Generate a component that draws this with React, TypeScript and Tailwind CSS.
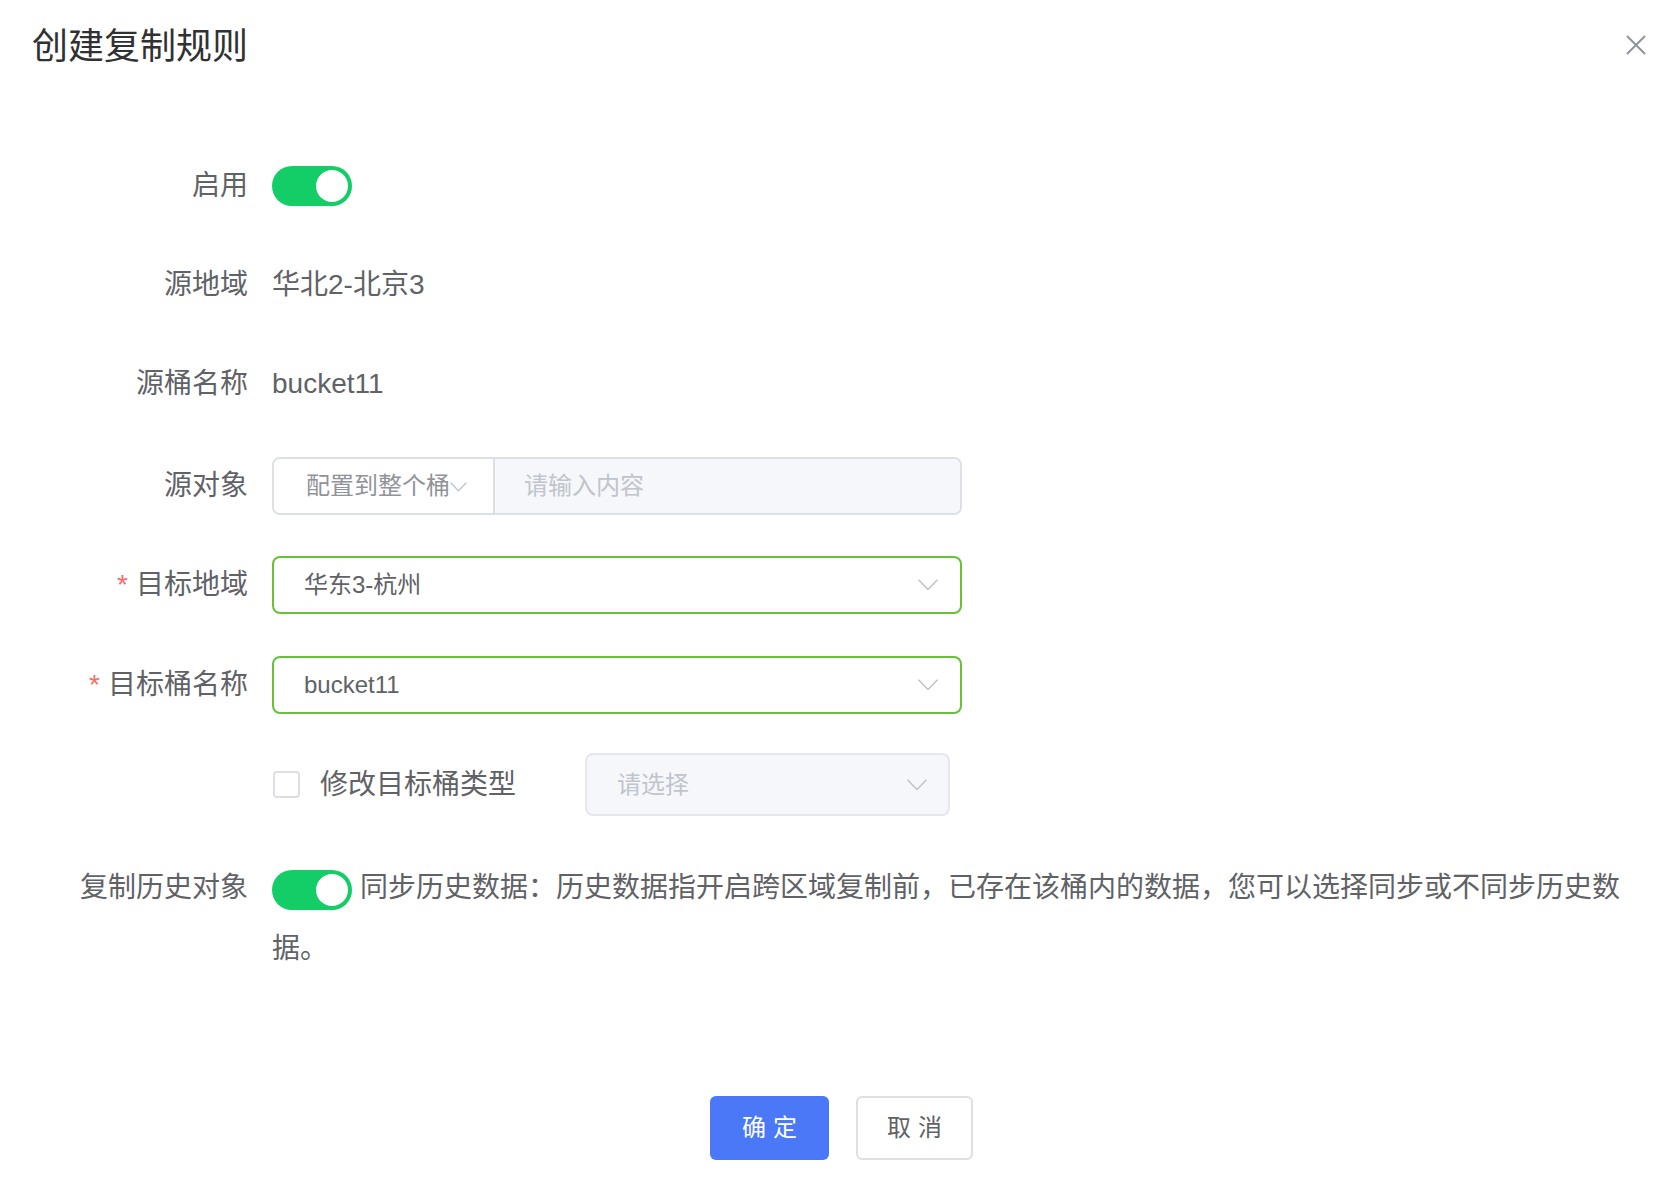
import React from "react";

const font = { fontFamily: '"Liberation Sans", "Noto Sans CJK SC", sans-serif' };

function Chevron({ className = "" }: { className?: string }) {
  return (
    <svg className={className} width="20" height="12" viewBox="0 0 20 12" fill="none">
      <path d="M1 1.2 L10 10.5 L19 1.2" stroke="#c0c4cc" strokeWidth="1.6" strokeLinecap="round" strokeLinejoin="round" />
    </svg>
  );
}

function Toggle({ inline = false }: { inline?: boolean }) {
  return (
    <span
      className={`${inline ? "inline-flex align-middle" : "flex"} w-[80px] h-[40px] rounded-full bg-[#13ce66] p-[4px] justify-end shrink-0`}
    >
      <span className="w-[32px] h-[32px] rounded-full bg-white" />
    </span>
  );
}

function Label({ text, required = false }: { text: string; required?: boolean }) {
  return (
    <div className="w-[248px] shrink-0 text-right text-[28px] text-[#606266]">
      {required && <span className="text-[#f56c6c] mr-[8px]">*</span>}
      {text}
    </div>
  );
}

export default function App() {
  return (
    <div className="w-[1653px] h-[1180px] bg-white overflow-hidden" style={font}>
      {/* Header */}
      <div className="h-[94px] flex items-center justify-between pl-[32px] pr-[7px]">
        <h1 className="text-[36px] text-[#303133] font-normal leading-none">创建复制规则</h1>
        <svg className="mb-[4px]" width="20" height="20" viewBox="0 0 20 20" fill="none">
          <path d="M1 1 L19 19 M19 1 L1 19" stroke="#909399" strokeWidth="2" />
        </svg>
      </div>

      {/* Form */}
      <div className="pr-[26px]">
        <div className="flex items-center h-[58px] mt-[63px]">
          <Label text="启用" />
          <div className="ml-[24px]">
            <Toggle />
          </div>
        </div>

        <div className="flex items-center h-[58px] mt-[41px]">
          <Label text="源地域" />
          <div className="ml-[24px] text-[28px] text-[#606266]">华北2-北京3</div>
        </div>

        <div className="flex items-center h-[58px] mt-[41px]">
          <Label text="源桶名称" />
          <div className="ml-[24px] text-[28px] text-[#606266]">bucket11</div>
        </div>

        <div className="flex items-center h-[58px] mt-[44px]">
          <Label text="源对象" />
          <div className="ml-[24px] w-[690px] h-[58px] flex border-2 border-[#dcdfe6] rounded-[8px] overflow-hidden">
            <div className="w-[221px] bg-white border-r-2 border-[#dcdfe6] flex items-center pl-[32px] text-[24px] text-[#909399]">
              <span>配置到整个桶</span>
              <Chevron className="w-[17px] h-[10px] mt-[2px]" />
            </div>
            <div className="flex-1 bg-[#f5f7fa] flex items-center pl-[29px] text-[24px] text-[#c0c4cc]">
              请输入内容
            </div>
          </div>
        </div>

        <div className="flex items-center h-[58px] mt-[41px]">
          <Label text="目标地域" required />
          <div className="ml-[24px] w-[690px] h-[58px] flex items-center justify-between border-2 border-[#67c23a] rounded-[8px] pl-[30px] pr-[22px] text-[24px] text-[#606266]">
            <span>华东3-杭州</span>
            <Chevron />
          </div>
        </div>

        <div className="flex items-center h-[58px] mt-[42px]">
          <Label text="目标桶名称" required />
          <div className="ml-[24px] w-[690px] h-[58px] flex items-center justify-between border-2 border-[#67c23a] rounded-[8px] pl-[30px] pr-[22px] text-[24px] text-[#606266]">
            <span>bucket11</span>
            <Chevron />
          </div>
        </div>

        <div className="flex items-center h-[63px] mt-[39px]">
          <div className="w-[248px] shrink-0" />
          <div className="ml-[25px] flex items-center">
            <span className="w-[27px] h-[27px] border-2 border-[#dcdfe6] rounded-[4px] bg-white" />
            <span className="ml-[20px] text-[28px] text-[#606266]">修改目标桶类型</span>
          </div>
          <div className="ml-[69px] w-[365px] h-[63px] flex items-center justify-between border-2 border-[#e4e7ed] bg-[#f5f7fa] rounded-[8px] pl-[30px] pr-[21px] text-[24px] text-[#c0c4cc]">
            <span>请选择</span>
            <Chevron />
          </div>
        </div>

        <div className="flex items-start mt-[41px]">
          <div className="w-[248px] shrink-0 text-right text-[28px] leading-[61px] text-[#606266]">复制历史对象</div>
          <div className="ml-[24px] flex-1 text-[28px] leading-[61px] text-[#606266]">
            <Toggle inline />
            <span className="ml-[8px]">
              同步历史数据：历史数据指开启跨区域复制前，已存在该桶内的数据，您可以选择同步或不同步历史数据。
            </span>
          </div>
        </div>
      </div>

      {/* Footer */}
      <div className="flex justify-center gap-[27px] pl-[30px] mt-[117px]">
        <button className="w-[119px] h-[64px] rounded-[6px] bg-[#4a78f6] text-white text-[24px] flex items-center justify-center">
          <span className="tracking-[7px] mr-[-7px]">确定</span>
        </button>
        <button className="w-[117px] h-[64px] rounded-[6px] bg-white border-2 border-[#dcdfe6] text-[#606266] text-[24px] flex items-center justify-center">
          <span className="tracking-[7px] mr-[-7px]">取消</span>
        </button>
      </div>
    </div>
  );
}
